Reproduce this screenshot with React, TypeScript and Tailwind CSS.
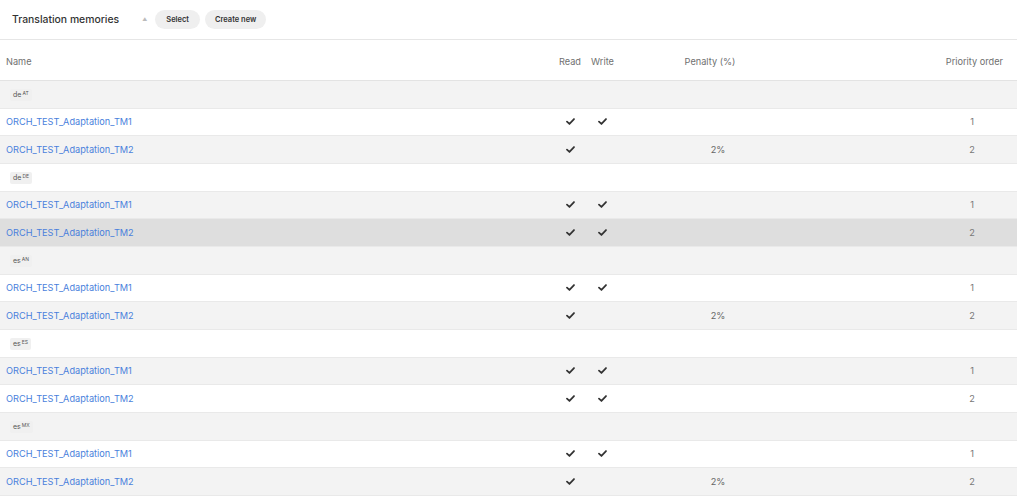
import React from "react";

type Tm = { name: string; read: boolean; write: boolean; penalty?: string; priority: number };
type Group = { lang: string; region: string; items: Tm[] };

const groups: Group[] = [
  {
    lang: "de",
    region: "AT",
    items: [
      { name: "ORCH_TEST_Adaptation_TM1", read: true, write: true, priority: 1 },
      { name: "ORCH_TEST_Adaptation_TM2", read: true, write: false, penalty: "2%", priority: 2 },
    ],
  },
  {
    lang: "de",
    region: "DE",
    items: [
      { name: "ORCH_TEST_Adaptation_TM1", read: true, write: true, priority: 1 },
      { name: "ORCH_TEST_Adaptation_TM2", read: true, write: true, priority: 2 },
    ],
  },
  {
    lang: "es",
    region: "AN",
    items: [
      { name: "ORCH_TEST_Adaptation_TM1", read: true, write: true, priority: 1 },
      { name: "ORCH_TEST_Adaptation_TM2", read: true, write: false, penalty: "2%", priority: 2 },
    ],
  },
  {
    lang: "es",
    region: "ES",
    items: [
      { name: "ORCH_TEST_Adaptation_TM1", read: true, write: true, priority: 1 },
      { name: "ORCH_TEST_Adaptation_TM2", read: true, write: true, priority: 2 },
    ],
  },
  {
    lang: "es",
    region: "MX",
    items: [
      { name: "ORCH_TEST_Adaptation_TM1", read: true, write: true, priority: 1 },
      { name: "ORCH_TEST_Adaptation_TM2", read: true, write: false, penalty: "2%", priority: 2 },
    ],
  },
];

const grid = "grid grid-cols-[555px_30px_35px_180px_1fr_62px] pr-[14px] items-center";

function Check() {
  return (
    <svg width="9" height="7" viewBox="0 0 10 8" className="mx-auto">
      <path d="M1 4.2 L3.8 6.8 L9 1.2" fill="none" stroke="#333" strokeWidth="2" strokeLinecap="round" strokeLinejoin="round" />
    </svg>
  );
}

export default function App() {
  // flatten into rows so striping continues across groups
  const rows: React.ReactNode[] = [];
  let i = 0;
  const hoverIndex = 5;
  groups.forEach((g, gi) => {
    const gray = i % 2 === 0;
    rows.push(
      <div
        key={`g${gi}`}
        className={`${grid} h-[27.67px] border-b border-[#e9e9e9] ${gray ? "bg-[#f3f3f3]" : "bg-white"}`}
      >
        <div className="pl-[10px]">
          <span className="inline-flex items-start rounded-[2px] bg-[#f0f0f0] px-[3px] py-[1px] text-[7px] leading-[10px] text-[#555]">
            {g.lang}
            <sup className="top-0 ml-[1px] text-[5px] leading-[6px]">{g.region}</sup>
          </span>
        </div>
      </div>
    );
    i++;
    g.items.forEach((t, ti) => {
      const bg = i === hoverIndex ? "bg-[#dedede]" : i % 2 === 0 ? "bg-[#f3f3f3]" : "bg-white";
      rows.push(
        <div key={`r${gi}-${ti}`} className={`${grid} h-[27.67px] border-b border-[#e9e9e9] ${bg}`}>
          <div className="pl-[6px] text-[#4a7fdc]">{t.name}</div>
          <div>{t.read && <Check />}</div>
          <div>{t.write && <Check />}</div>
          <div className="pl-4 text-center text-[#666]">{t.penalty}</div>
          <div />
          <div className="text-center text-[#777]">{t.priority}</div>
        </div>
      );
      i++;
    });
  });

  return (
    <div className="h-[496px] w-[1017px] overflow-hidden bg-white font-['Inter',sans-serif] text-[9.2px]">
      <div className="flex h-[40px] items-center border-b border-[#e6e6e6] pl-[12px]">
        <span className="text-[10.4px] font-medium text-[#333]">Translation memories</span>
        <span className="ml-[23px] mt-[1px] text-[5px] text-[#bbb]">▲</span>
        <div className="ml-[8px] flex gap-[5px]">
          <button className="h-[19px] rounded-full bg-[#efefef] px-[11px] text-[7.5px] font-semibold text-[#333]">Select</button>
          <button className="h-[19px] rounded-full bg-[#efefef] px-[10px] text-[7.5px] font-semibold text-[#333]">Create new</button>
        </div>
      </div>
      <div className={`${grid} h-[41px] border-b border-[#e3e3e3] pt-[4px] text-[#6f6f6f]`}>
        <div className="pl-[6px]">Name</div>
        <div className="text-center">Read</div>
        <div className="text-center">Write</div>
        <div className="text-center">Penalty (%)</div>
        <div />
        <div className="text-right">Priority order</div>
      </div>
      {rows}
    </div>
  );
}
